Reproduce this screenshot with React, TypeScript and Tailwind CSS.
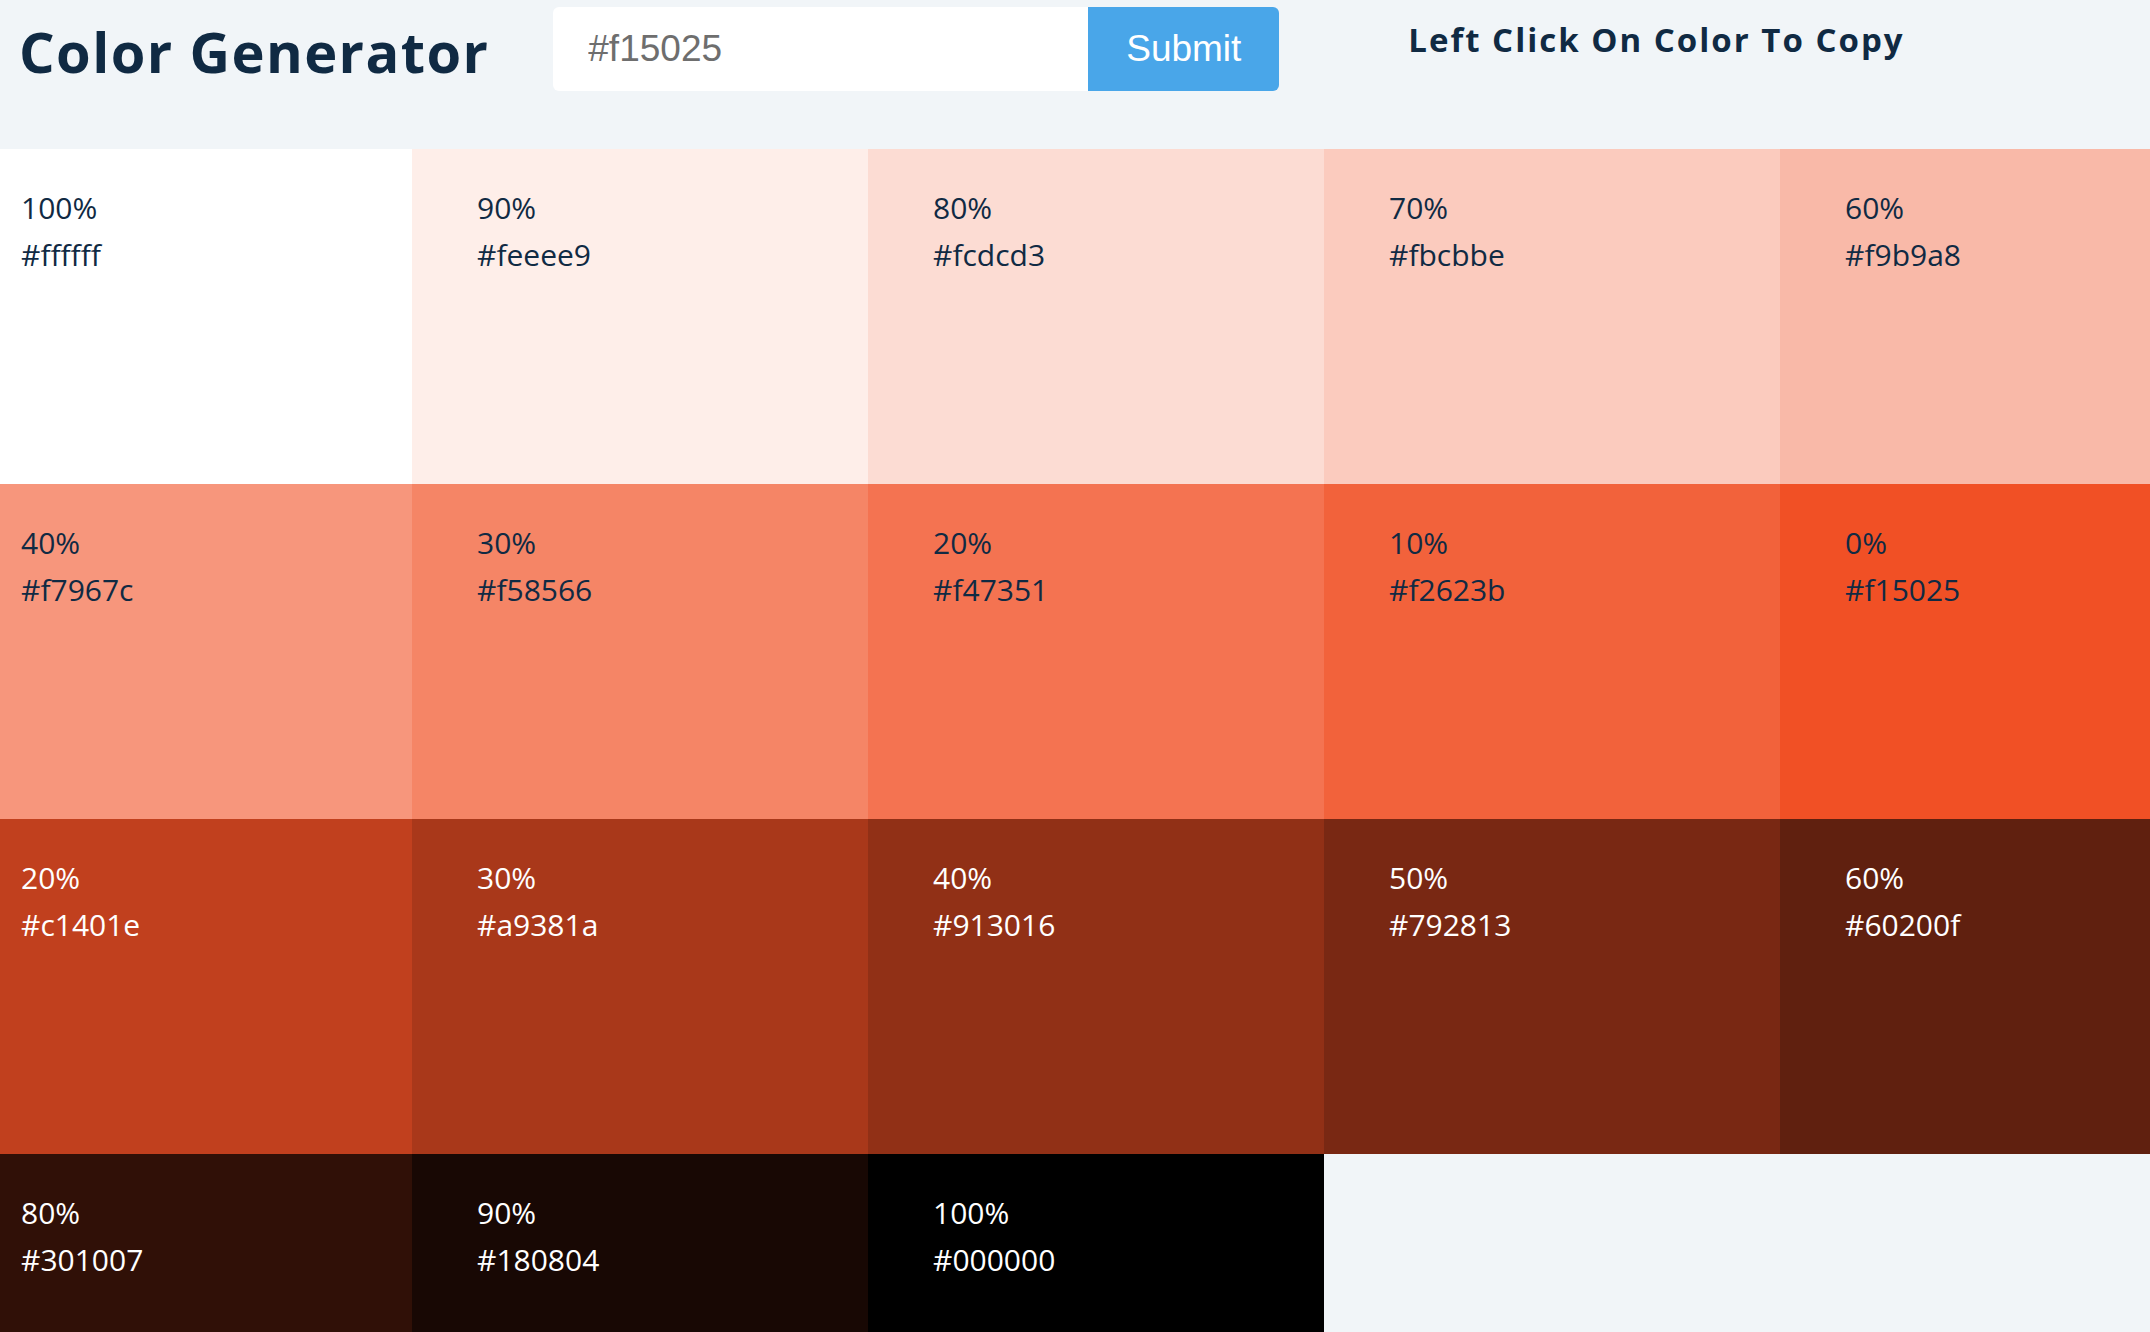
import { useState } from 'react'

type Swatch = { weight: number; hex: string; light: boolean }

const base = '#f15025'

const swatches: Swatch[] = [
  { weight: 100, hex: '#ffffff', light: false },
  { weight: 90, hex: '#feeee9', light: false },
  { weight: 80, hex: '#fcdcd3', light: false },
  { weight: 70, hex: '#fbcbbe', light: false },
  { weight: 60, hex: '#f9b9a8', light: false },
  { weight: 50, hex: '#f8a792', light: false },
  { weight: 40, hex: '#f7967c', light: false },
  { weight: 30, hex: '#f58566', light: false },
  { weight: 20, hex: '#f47351', light: false },
  { weight: 10, hex: '#f2623b', light: false },
  { weight: 0, hex: '#f15025', light: false },
  { weight: 10, hex: '#d94821', light: true },
  { weight: 20, hex: '#c1401e', light: true },
  { weight: 30, hex: '#a9381a', light: true },
  { weight: 40, hex: '#913016', light: true },
  { weight: 50, hex: '#792813', light: true },
  { weight: 60, hex: '#60200f', light: true },
  { weight: 70, hex: '#48180b', light: true },
  { weight: 80, hex: '#301007', light: true },
  { weight: 90, hex: '#180804', light: true },
  { weight: 100, hex: '#000000', light: true },
]

function SingleColor({ weight, hex, light }: Swatch) {
  return (
    <article
      className={`pl-[65px] pt-[35px] cursor-pointer font-['Open_Sans',sans-serif] text-[30px] leading-[47px] ${
        light ? 'text-white' : 'text-[#102a43]'
      }`}
      style={{ backgroundColor: hex }}
      onClick={() => navigator.clipboard?.writeText(hex)}
    >
      <p>{weight}%</p>
      <p>{hex}</p>
    </article>
  )
}

export default function App() {
  const [color, setColor] = useState(base)

  return (
    <main className="w-full min-h-screen overflow-hidden bg-[#f1f5f8] text-[#102a43]">
      <section className="flex items-start h-[149px] pl-[19px]">
        <h3 className="mt-[23px] font-['Open_Sans',sans-serif] font-bold text-[56px] leading-none tracking-[1.4px] whitespace-nowrap">
          Color Generator
        </h3>
        <form className="flex ml-[64px] mt-[7px]" onSubmit={(e) => e.preventDefault()}>
          <input
            type="text"
            value={color}
            onChange={(e) => setColor(e.target.value)}
            className="w-[535px] h-[84px] pl-[35px] bg-white rounded-l-[6px] font-['Liberation_Sans',Arial,sans-serif] text-[37px] text-[#6e6e6e] outline-none"
          />
          <button
            type="submit"
            className="w-[191px] h-[84px] bg-[#49a6e9] rounded-r-[6px] font-['Liberation_Sans',Arial,sans-serif] text-[37px] text-white"
          >
            Submit
          </button>
        </form>
        <h4 className="ml-[129px] mt-[23px] font-['Open_Sans',sans-serif] font-bold text-[33px] leading-none tracking-[2px] whitespace-nowrap">
          Left Click On Color To Copy
        </h4>
      </section>
      <section className="grid grid-cols-[repeat(6,456px)] auto-rows-[335px] w-[2736px] -ml-[44px]">
        {swatches.map((s, i) => (
          <SingleColor key={i} {...s} />
        ))}
      </section>
    </main>
  )
}
